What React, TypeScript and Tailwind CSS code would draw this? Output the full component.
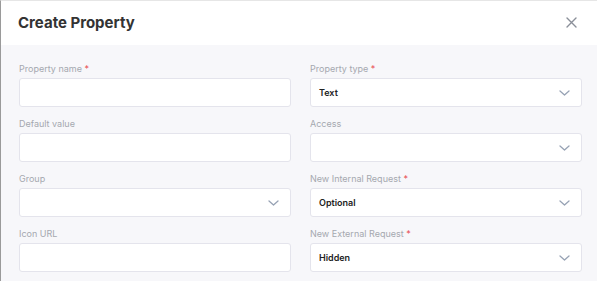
import React from "react";

const Chevron = () => (
  <svg width="11" height="6" viewBox="0 0 11 6" fill="none" className="shrink-0">
    <path d="M1 1l4.5 4 4.5-4" stroke="#97a2b4" strokeWidth="1.3" strokeLinecap="round" strokeLinejoin="round" />
  </svg>
);

type FieldProps = { label: string; required?: boolean; select?: boolean; value?: string };

const Field = ({ label, required, select, value }: FieldProps) => (
  <div className="flex flex-col">
    <div className="h-[12px] leading-[12px] text-[9px] text-[#a5a8af] mb-[3px] whitespace-nowrap">
      {label}
      {required && <span className="text-[#e84a50]"> *</span>}
    </div>
    <div className="h-[29px] bg-white border border-[#e4e4ec] rounded-[3px] flex items-center justify-between pl-[8px] pr-[11px]">
      <span className="text-[9px] font-semibold text-[#222]">{value ?? ""}</span>
      {select && <Chevron />}
    </div>
  </div>
);

export default function App() {
  return (
    <div
      className="w-[597px] h-[281px] overflow-hidden border-l border-l-[#9a9a9a] border-t border-t-[#e6e6e6] bg-[#f7f7fa] flex flex-col"
      style={{ fontFamily: "Inter, 'Noto Sans', sans-serif" }}
    >
      <div className="h-[44px] bg-white flex items-center justify-between pl-[17px] pr-[20px] shrink-0">
        <h1 className="text-[15px] font-bold text-[#333] leading-none -mt-[2px]">Create Property</h1>
        <svg width="11" height="11" viewBox="0 0 11 11" fill="none" className="-mt-[1px]">
          <path d="M1 1l9 9M10 1l-9 9" stroke="#8a8f99" strokeWidth="1.4" strokeLinecap="round" />
        </svg>
      </div>
      <div className="grid grid-cols-[272px_272px] gap-x-[19px] gap-y-[11px] pl-[18px] pr-[15px] pt-[18px]">
        <Field label="Property name" required />
        <Field label="Property type" required select value="Text" />
        <Field label="Default value" />
        <Field label="Access" select />
        <Field label="Group" select />
        <Field label="New Internal Request" required select value="Optional" />
        <Field label="Icon URL" />
        <Field label="New External Request" required select value="Hidden" />
      </div>
    </div>
  );
}
